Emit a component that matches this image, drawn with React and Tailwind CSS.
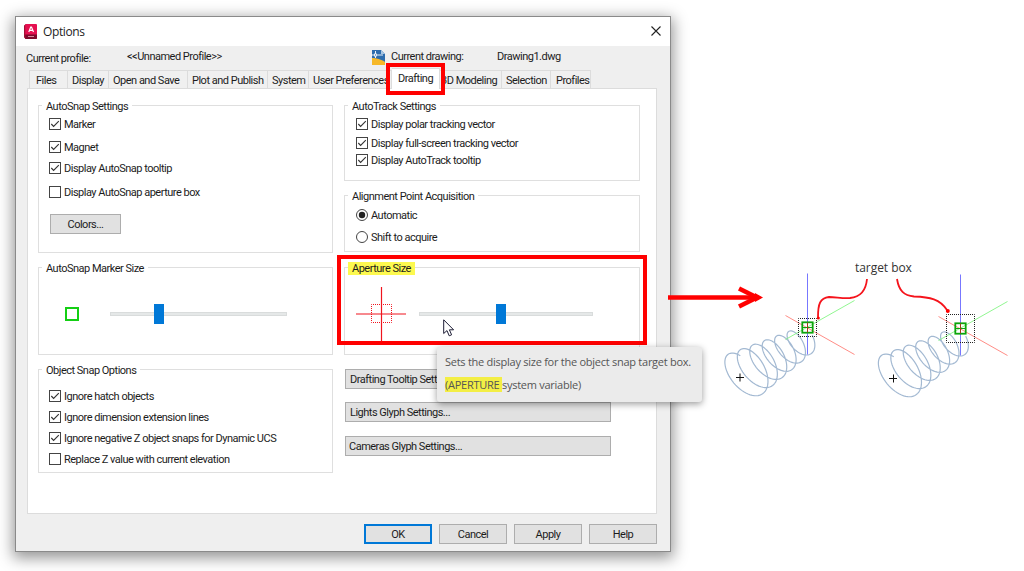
import React from "react";
import clsx from "clsx";

const TABS = [
  { label: "Files", box: "w-[39px] pl-[6px]" },
  { label: "Display", box: "w-[41px] pl-[4px]" },
  { label: "Open and Save", box: "w-[79px] pl-[4px]" },
  { label: "Plot and Publish", box: "w-[80px] pl-[4px]" },
  { label: "System", box: "w-[41px] pl-[4px]" },
  { label: "User Preferences", box: "w-[83px] pl-[4px]" },
  { label: "Drafting", box: "w-[48px] pl-[6px]", active: true },
  { label: "3D Modeling", box: "w-[62px] pl-[1px]" },
  { label: "Selection", box: "w-[49px] pl-[4px]" },
  { label: "Profiles", box: "w-[40px] pl-[5px]" },
];

// Outline of one coil, drawn as a tapering tilted helix
function helixPath() {
  let d = "";
  for (let deg = 130; deg <= 2250; deg += 6) {
    const t = (deg - 180) / 1980;
    const a = (deg * Math.PI) / 180;
    const s = 1 - 0.44 * t;
    const x = 743 + 60 * t + s * (15.5 * Math.cos(a) + 11.5 * Math.sin(a));
    const y = 376 - 34.6 * t + s * (21.2 * Math.cos(a) - 9.5 * Math.sin(a));
    d += `${d ? "L" : "M"}${x.toFixed(2)} ${y.toFixed(2)}`;
  }
  return d;
}

const HELIX = helixPath();

function GroupBox({ title, className, highlight, children }) {
  return (
    <section className={clsx("border border-[#dfdfdf] flex flex-col items-start", className)}>
      <h2
        className={clsx(
          "-mt-[6px] ml-[3px] px-[4px] h-[13px] leading-[13px] shrink-0 whitespace-nowrap",
          highlight ? "bg-[#fdf94f]" : "bg-white"
        )}
      >
        {title}
      </h2>
      {children}
    </section>
  );
}

function Check({ label, checked, className }) {
  return (
    <label className={clsx("flex items-center h-[12px] gap-[3px] whitespace-nowrap", className)}>
      <svg width="12" height="12" viewBox="0 0 12 12" fill="none" className="shrink-0">
        <rect x="0.5" y="0.5" width="11" height="11" fill="#fff" stroke="#444" />
        {checked && <path d="M2.3 6 L4.6 8.4 L9.8 3.2" stroke="#333" strokeWidth="1.1" />}
      </svg>
      <span className="pt-[3px]">{label}</span>
    </label>
  );
}

function Radio({ label, checked, className }) {
  return (
    <label className={clsx("flex items-center h-[12px] gap-[3px] whitespace-nowrap", className)}>
      <svg width="12" height="12" viewBox="0 0 12 12" className="shrink-0">
        <circle cx="6" cy="6" r="5.5" fill="#fff" stroke="#444" />
        {checked && <circle cx="6" cy="6" r="3.2" fill="#222" />}
      </svg>
      <span className="pt-[3px]">{label}</span>
    </label>
  );
}

function Button({ children, className }) {
  return (
    <button className={clsx("flex items-center h-[20px] bg-[#e1e1e1] border whitespace-nowrap", className)}>
      <span className="pt-[3px]">{children}</span>
    </button>
  );
}

function Slider({ className, thumb }) {
  return (
    <div className={clsx("flex items-center h-[20px]", className)}>
      <div className="flex items-center w-full h-[4px] bg-[#e5e8e8] border border-[#d9dcdc]">
        <div className={clsx("w-[10px] h-[20px] bg-[#0078d7] shrink-0", thumb)} />
      </div>
    </div>
  );
}

function TitleBar() {
  return (
    <header className="flex items-center h-[29px] bg-white pl-[8px] pr-[9px] font-['Open_Sans',sans-serif] text-[12px] tracking-[-0.4px]">
      <svg width="13" height="15" viewBox="0 0 13 15" className="shrink-0 -mt-[1px]">
        <path d="M0 1.5 L2 0 V15 L0 13.5 Z" fill="#a20f35" />
        <rect x="1.2" width="11.8" height="15" rx="1" fill="#e51050" />
        <path d="M1.2 10.5 H13 V14 Q13 15 12 15 H1.2 Z" fill="#7d0a2b" />
        <path d="M4.8 8 L6.7 3 H7.5 L9.5 8 M5.6 6.4 H8.7" stroke="#fff" strokeWidth="1.2" fill="none" />
        <path d="M4 12.5 H10" stroke="#d98aa0" strokeWidth="1" />
      </svg>
      <h1 className="ml-[6px]">Options</h1>
      <svg width="10" height="10" viewBox="0 0 10 10" className="ml-auto -mt-[1px]" stroke="#222" strokeWidth="1.1">
        <path d="M0.5 0.5 L9.5 9.5 M9.5 0.5 L0.5 9.5" />
      </svg>
    </header>
  );
}

function ProfileRow() {
  return (
    <div className="flex items-start h-[23px] pl-[10px] pt-[3px] leading-[15px] whitespace-nowrap">
      <span className="w-[101px] pt-[2px]">Current profile:</span>
      <span className="w-[244px]">&lt;&lt;Unnamed Profile&gt;&gt;</span>
      <svg width="14" height="15" viewBox="0 0 14 15" className="w-[14px] mt-[1px] mr-[6px] shrink-0">
        <path d="M1 0 H10 L14 4 V12 L1 8 Z" fill="#2d6cad" />
        <path d="M10 0 L14 4 H10 Z" fill="#a8c6e2" />
        <path d="M1 8 Q8 8 14 12 V15 H1 Z" fill="#f6b829" />
        <path d="M0 5 H12 M4.5 1 V8" stroke="#fff" strokeWidth="0.9" />
        <rect x="3.5" y="4" width="2" height="2" fill="#2d6cad" stroke="#fff" strokeWidth="0.8" />
      </svg>
      <span className="w-[106px]">Current drawing:</span>
      <span>Drawing1.dwg</span>
    </div>
  );
}

function TabStrip() {
  return (
    <nav className="flex items-end h-[19px] ml-[13px] relative">
      {TABS.map((tab) => (
        <div
          key={tab.label}
          className={clsx(
            "border-t border-r border-[#dcdcdc] whitespace-nowrap overflow-hidden shrink-0 first:border-l",
            tab.box,
            tab.active ? "h-[21px] bg-white leading-[19px] -mb-[1px]" : "h-[18px] bg-[#f0f0f0] leading-[19px]"
          )}
        >
          {tab.label}
        </div>
      ))}
    </nav>
  );
}

function LeftColumn() {
  return (
    <div className="w-[295px]">
      <GroupBox title="AutoSnap Settings" className="h-[148px]">
        <Check label="Marker" checked className="ml-[10px] mt-[5px]" />
        <Check label="Magnet" checked className="ml-[10px] mt-[11px]" />
        <Check label="Display AutoSnap tooltip" checked className="ml-[10px] mt-[9px]" />
        <Check label="Display AutoSnap aperture box" className="ml-[10px] mt-[12px]" />
        <Button className="ml-[11px] mt-[16px] w-[71px] justify-center border-[#adadad]">Colors...</Button>
      </GroupBox>

      <GroupBox title="AutoSnap Marker Size" className="h-[88px] mt-[14px]">
        <div className="flex items-center mt-[29px] h-[20px]">
          <div className="ml-[26px] size-[14px] border-2 border-[#14cf14]" />
          <Slider className="ml-[31px] w-[177px]" thumb="ml-[43px]" />
        </div>
      </GroupBox>

      <GroupBox title="Object Snap Options" className="h-[104px] mt-[14px]">
        <Check label="Ignore hatch objects" checked className="ml-[10px] mt-[13px]" />
        <Check label="Ignore dimension extension lines" checked className="ml-[10px] mt-[9px]" />
        <Check label="Ignore negative Z object snaps for Dynamic UCS" checked className="ml-[10px] mt-[9px]" />
        <Check label="Replace Z value with current elevation" className="ml-[10px] mt-[9px]" />
      </GroupBox>
    </div>
  );
}

function RightColumn() {
  return (
    <div className="w-[296px]">
      <GroupBox title="AutoTrack Settings" className="h-[76px]">
        <Check label="Display polar tracking vector" checked className="ml-[11px] mt-[5px]" />
        <Check label="Display full-screen tracking vector" checked className="ml-[11px] mt-[7px]" />
        <Check label="Display AutoTrack tooltip" checked className="ml-[11px] mt-[5px]" />
      </GroupBox>

      <GroupBox title="Alignment Point Acquisition" className="h-[57px] mt-[14px]">
        <Radio label="Automatic" checked className="ml-[11px] mt-[6px]" />
        <Radio label="Shift to acquire" className="ml-[11px] mt-[10px]" />
      </GroupBox>

      <GroupBox title="Aperture Size" highlight className="h-[88px] mt-[15px]">
        <div className="flex items-center mt-[12px] h-[54px]">
          <svg width="51" height="54" viewBox="0 0 51 54" className="ml-[11px]" fill="none">
            <path d="M0 27 H50 M25.5 0 V54" stroke="#f0141e" strokeWidth="1.2" />
            <rect
              x="15.5"
              y="17.5"
              width="20"
              height="18"
              stroke="#f0141e"
              strokeDasharray="1 1"
              strokeDashoffset="0.5"
            />
          </svg>
          <Slider className="ml-[12px] w-[174px]" thumb="ml-[76px]" />
        </div>
      </GroupBox>

      <Button className="mt-[14px] ml-[1px] w-[266px] pl-[4px] border-[#adadad]">Drafting Tooltip Settings...</Button>
      <Button className="mt-[13px] ml-[1px] w-[266px] pl-[4px] border-[#adadad]">Lights Glyph Settings...</Button>
      <Button className="mt-[14px] ml-[1px] w-[266px] pl-[3px] border-[#adadad]">Cameras Glyph Settings...</Button>
    </div>
  );
}

function OptionsDialog() {
  return (
    <div className="w-[656px] h-[536px] ml-[15px] mt-[16px] shrink-0 flex flex-col bg-[#efefef] border border-[#8a8a8a] shadow-[0_4px_14px_2px_rgba(0,0,0,0.42)]">
      <TitleBar />
      <ProfileRow />
      <TabStrip />
      <main className="flex gap-[11px] w-[630px] h-[426px] ml-[11px] pl-[10px] pt-[16px] bg-white border border-[#dcdcdc]">
        <LeftColumn />
        <RightColumn />
      </main>
      <footer className="flex justify-end gap-[7px] mt-[10px] pr-[13px]">
        <Button className="w-[68px] justify-center border-2 border-[#0078d7]">OK</Button>
        <Button className="w-[68px] justify-center border-[#adadad]">Cancel</Button>
        <Button className="w-[68px] justify-center border-[#adadad]">Apply</Button>
        <Button className="w-[68px] justify-center border-[#adadad]">Help</Button>
      </footer>
    </div>
  );
}

function Coil({ cx, cy, half, shift }) {
  return (
    <g fill="none">
      <path d={HELIX} transform={shift} stroke="#a3b9d2" strokeWidth="1.2" />
      <path d={`M${cx} ${cy - 54} V${cy + 27}`} stroke="#7777ff" />
      <path d={`M${cx - 22} ${cy - 12} L${cx + 47} ${cy + 27}`} stroke="#ff8078" strokeWidth="0.9" />
      <path d={`M${cx - 22} ${cy + 12} L${cx + 47} ${cy - 27}`} stroke="#84f584" strokeWidth="0.9" />
      <rect
        x={cx - half}
        y={cy - half}
        width={half * 2}
        height={half * 2}
        stroke="#222"
        strokeDasharray="1 1"
        strokeDashoffset="0.5"
      />
      <rect x={cx - 5.2} y={cy - 5.2} width="10.4" height="10.4" stroke="#0ca50c" strokeWidth="1.8" />
      <path d={`M${cx - 5} ${cy} H${cx + 5}`} stroke="#0ca50c" />
      <path d={`M${cx} ${cy - 5} V${cy + 5}`} stroke="#a33c14" />
    </g>
  );
}

// Canvas to the right of the dialog; user space is the page's own
function CoilFigure() {
  return (
    <figure className="relative -ml-[3px] w-[356px] h-[571px] shrink-0">
      <svg width="356" height="571" viewBox="668 0 356 571" fill="none">
        <path d="M668 297.5 H757" stroke="#f00" strokeWidth="4.5" />
        <path d="M739 288.5 L757 297.5 L739 306.5" stroke="#f00" strokeWidth="4.5" />
        <path d="M755 293 L763 297.5 L755 302 Z" fill="#f00" />
        <Coil cx={807.5} cy={327.5} half={9} />
        <Coil cx={960.5} cy={328.5} half={14} shift="translate(153.5 1)" />
        <path d="M736 377.5 H744 M740 373.5 V381.5 M889 378.5 H897 M893.5 374.5 V382.5" stroke="#111" />
        <path
          d="M867 279 C866 290 861 297 850 298 C842 298.5 836 297 829 297 C820 298 818 304 818 317"
          stroke="#f5141c"
          strokeWidth="1.8"
        />
        <path
          d="M897 279 C899 291 904 295.5 914 296.5 C930 297 940 299 947 310"
          stroke="#f5141c"
          strokeWidth="1.8"
        />
        <circle cx="818.3" cy="318" r="1.5" fill="#f00" />
        <circle cx="947.8" cy="311" r="2" fill="#f00" />
      </svg>
      <figcaption className="absolute left-[187px] top-[260px] leading-[16px] text-[12px] tracking-[-0.05px] font-['Open_Sans',sans-serif] text-[#333] whitespace-nowrap">
        target box
      </figcaption>
    </figure>
  );
}

function Tooltip() {
  return (
    <div className="absolute left-[437px] top-[347px] w-[265px] h-[55px] rounded-[3px] bg-[#ebebeb] pl-[8px] pt-[7px] shadow-[0_2px_7px_rgba(0,0,0,0.4)] font-['Open_Sans',sans-serif] text-[11px] leading-[16px] text-[#555] whitespace-nowrap tracking-[-0.26px]">
      <p>Sets the display size for the object snap target box.</p>
      <p className="mt-[7px]">
        <span className="bg-[#f3ee45]">(APERTURE </span>system variable)
      </p>
    </div>
  );
}

export default function App() {
  return (
    <div className="relative flex w-[1024px] h-[571px] overflow-hidden bg-white font-['Roboto',sans-serif] text-[11px] tracking-[-0.5px] text-[#1c1c1c]">
      <OptionsDialog />
      <CoilFigure />
      <div className="absolute left-[386px] top-[63px] w-[59px] h-[32px] border-4 border-[#ff0000]" />
      <div className="absolute left-[337px] top-[255px] w-[310px] h-[90px] border-[4.5px] border-[#ff0000]" />
      <Tooltip />
      <svg width="12" height="18" viewBox="0 0 12 18" className="absolute left-[443px] top-[319px]">
        <path
          d="M0.7 0.8 V14.5 L4 11.6 L6.2 16.8 L8.6 15.8 L6.4 10.8 H10.6 Z"
          fill="#fff"
          stroke="#1d1d35"
          strokeWidth="1"
        />
      </svg>
    </div>
  );
}
